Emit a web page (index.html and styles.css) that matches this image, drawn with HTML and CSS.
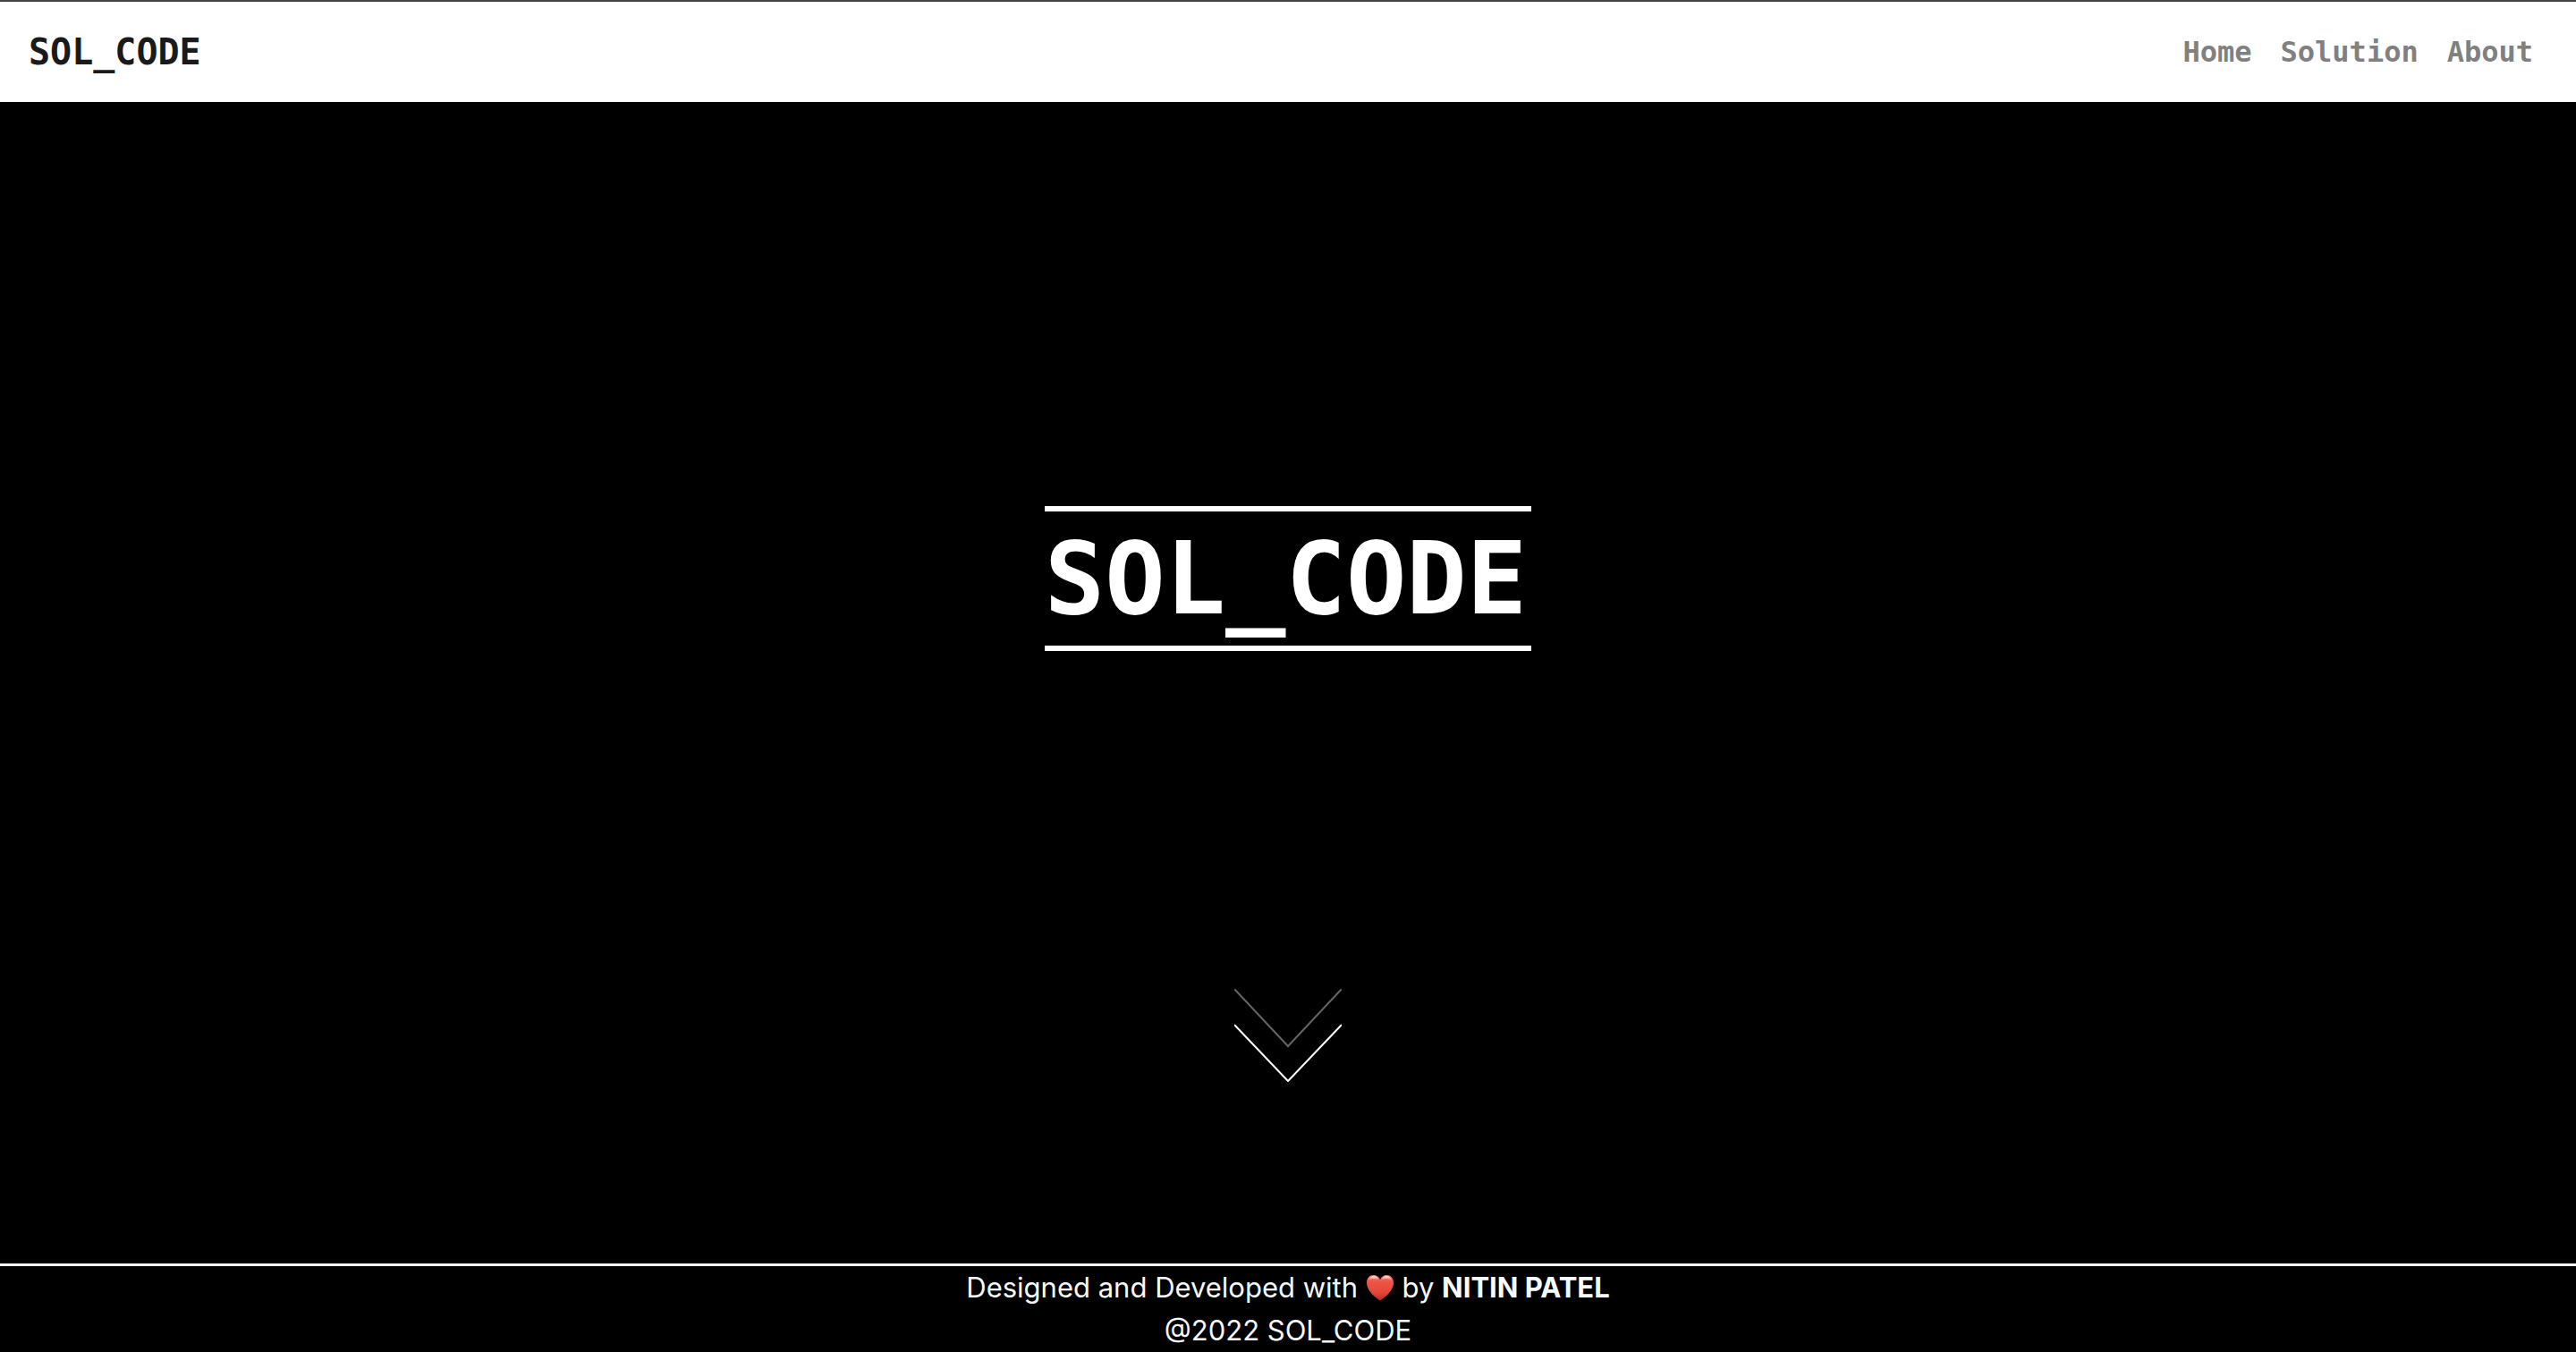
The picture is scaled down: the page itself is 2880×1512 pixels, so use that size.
FILE: index.html
```html
<!DOCTYPE html>
<html lang="en">
<head>
  <meta charset="utf-8">
  <meta name="viewport" content="width=device-width, initial-scale=1">
  <title>SOL_CODE</title>
  <link rel="stylesheet" href="styles.css">
</head>
<body>
  <header class="navbar">
    <a class="brand" href="#">SOL_CODE</a>
    <nav class="nav-links">
      <a href="#">Home</a>
      <a href="#solution">Solution</a>
      <a href="#about">About</a>
    </nav>
  </header>

  <main class="hero">
    <h1 class="hero-title">SOL_CODE</h1>
    <a class="scroll-down" href="#solution" aria-label="Scroll down">
      <svg class="arrows" viewBox="0 0 120 104" fill="none" stroke-width="2" aria-hidden="true">
        <path d="M0 0L60 64L120 0" stroke="#666"/>
        <path d="M0 40L60 103L120 40" stroke="#fff"/>
      </svg>
    </a>
  </main>

  <footer class="footer">
    <p>Designed and Developed with
      <svg class="heart" viewBox="0 0 32 30" role="img" aria-label="love">
        <defs>
          <linearGradient id="heart-fill" x1="0" y1="0" x2="0" y2="1">
            <stop offset="0" stop-color="#f58a7c"/>
            <stop offset="0.25" stop-color="#ee5547"/>
            <stop offset="0.7" stop-color="#e5453a"/>
            <stop offset="1" stop-color="#b92a1e"/>
          </linearGradient>
          <linearGradient id="heart-shine" x1="0" y1="0" x2="0" y2="1">
            <stop offset="0" stop-color="#fff" stop-opacity="0.8"/>
            <stop offset="1" stop-color="#fff" stop-opacity="0"/>
          </linearGradient>
        </defs>
        <path fill="url(#heart-fill)" d="M16 29.500C14 28 1 20 1 9.500C1 4 4.500 1 8.500 1C12 1 15 3 16 6C17 3 20 1 23.500 1C27.500 1 31 4 31 9.500C31 20 18 28 16 29.500Z"/>
        <path fill="url(#heart-shine)" d="M3 7C4 3.500 6.500 2 9 2C11.500 2 13.500 3.500 14 6C11 4.500 6 4.500 3 7ZM18 6C18.500 3.500 20.500 2 23 2C25.500 2 28 3.500 29 7C26 4.500 21 4.500 18 6Z"/>
      </svg>
      by <strong>NITIN PATEL</strong></p>
    <p>@2022 SOL_CODE</p>
  </footer>
</body>
</html>
```
FILE: styles.css
```css
* {
  box-sizing: border-box;
}

body {
  display: flex;
  flex-direction: column;
  min-height: 100vh;
  margin: 0;
  background: #000;
  color: #fff;
  font-family: Inter, sans-serif;
}

a {
  color: inherit;
  text-decoration: none;
}

.navbar {
  display: flex;
  align-items: center;
  justify-content: space-between;
  padding: 26px 48px 26px 32px;
  border-top: 2px solid #444;
  background: #fff;
  font-family: "DejaVu Sans Mono", monospace;
  font-weight: 700;
}

.brand {
  color: #1a1a1a;
  font-size: 40px;
  line-height: 60px;
}

.nav-links {
  display: flex;
  gap: 32px;
  color: #808080;
  font-size: 32px;
  line-height: 48px;
}

.hero {
  display: flex;
  flex: 1;
  flex-direction: column;
  align-items: center;
  gap: 25vh;
  padding-top: 452px;
}

.hero-title {
  margin: 0;
  padding: 8px 5px 8px 0;
  border: solid #fff;
  border-width: 6px 0;
  font-family: "DejaVu Sans Mono", monospace;
  font-size: 112px;
  font-weight: 700;
  line-height: 134px;
}

.arrows {
  display: block;
  width: 120px;
  height: 104px;
}

.footer {
  border-top: 3px solid #fff;
  color: #f8f9fa;
  font-size: 31px;
  line-height: 48px;
  text-align: center;
}

.footer p {
  margin: 0;
}

.heart {
  width: 32px;
  height: 30px;
  vertical-align: -4px;
}
```
